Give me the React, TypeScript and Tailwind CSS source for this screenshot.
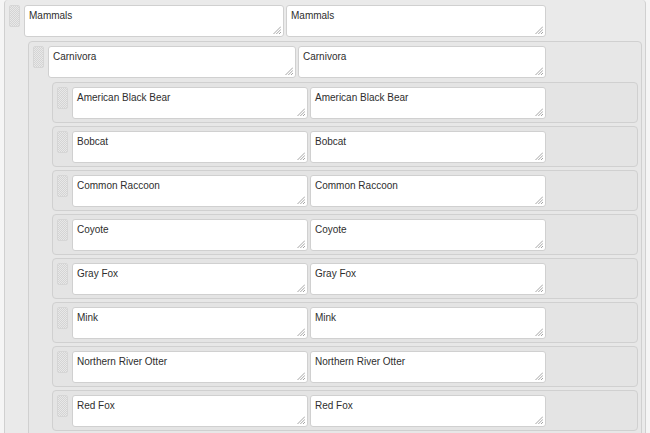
import React from "react";

type Node = { label: string; children?: Node[] };

const data: Node = {
  label: "Mammals",
  children: [
    {
      label: "Carnivora",
      children: [
        { label: "American Black Bear" },
        { label: "Bobcat" },
        { label: "Common Raccoon" },
        { label: "Coyote" },
        { label: "Gray Fox" },
        { label: "Mink" },
        { label: "Northern River Otter" },
        { label: "Red Fox" },
        { label: "Striped Skunk" },
      ],
    },
  ],
};

const widths = ["w-[260px]", "w-[248px]", "w-[236px]"];
const boxBg = ["bg-[#eaeaea]", "bg-[#e7e7e7]", "bg-[#e4e4e4]"];

function Grip() {
  return (
    <svg
      className="pointer-events-none absolute bottom-[3px] right-[3px]"
      width="8"
      height="8"
      viewBox="0 0 8 8"
    >
      <line x1="8" y1="0.5" x2="0.5" y2="8" stroke="#9a9a9a" strokeWidth="0.9" />
      <line x1="8" y1="3.3" x2="3.3" y2="8" stroke="#9a9a9a" strokeWidth="0.9" />
      <line x1="8" y1="6" x2="6" y2="8" stroke="#9a9a9a" strokeWidth="0.9" />
    </svg>
  );
}

function Field({ text, level, extra }: { text: string; level: number; extra?: string }) {
  return (
    <div className={`relative h-[32px] ${widths[level]} ${extra ?? ""}`}>
      <textarea
        readOnly
        defaultValue={text}
        className="block h-full w-full resize-none rounded-[3px] border border-[#d0d0d0] bg-white pl-[4px] pt-[4px] text-[10px] leading-[12px] text-[#2e2e2e] outline-none [font-family:'Liberation_Sans',Arial,sans-serif]"
      />
      <Grip />
    </div>
  );
}

function Handle() {
  return (
    <div className="mr-[4px] h-[22px] w-[11px] shrink-0 rounded-[2px] border border-[#d6d6d6] bg-[conic-gradient(#d4d4d4_25%,#e8e8e8_0_50%,#d4d4d4_0_75%,#e8e8e8_0)] bg-[length:2px_2px]" />
  );
}

function NodeBox({ node, level }: { node: Node; level: number }) {
  const top = level === 0 ? "border-t-0 pt-[5px]" : "pt-[4px]";
  return (
    <div
      className={`rounded-[4px] border border-[#d0d0d0] ${boxBg[level]} pb-[3px] pl-[4px] pr-[3px] ${top}`}
    >
      <div className="flex items-start">
        <Handle />
        <Field text={node.label} level={level} />
        <Field text={node.label} level={level} extra="ml-[2px]" />
      </div>
      {node.children && (
        <div className="ml-[19px] mt-[4px] flex flex-col gap-[3px]">
          {node.children.map((c) => (
            <NodeBox key={c.label} node={c} level={level + 1} />
          ))}
        </div>
      )}
    </div>
  );
}

export default function App() {
  return (
    <div className="h-[433px] w-[650px] overflow-hidden bg-[#f5f5f5] pl-[4px] pr-[4px] [font-family:'Liberation_Sans',Arial,sans-serif]">
      <NodeBox node={data} level={0} />
    </div>
  );
}
